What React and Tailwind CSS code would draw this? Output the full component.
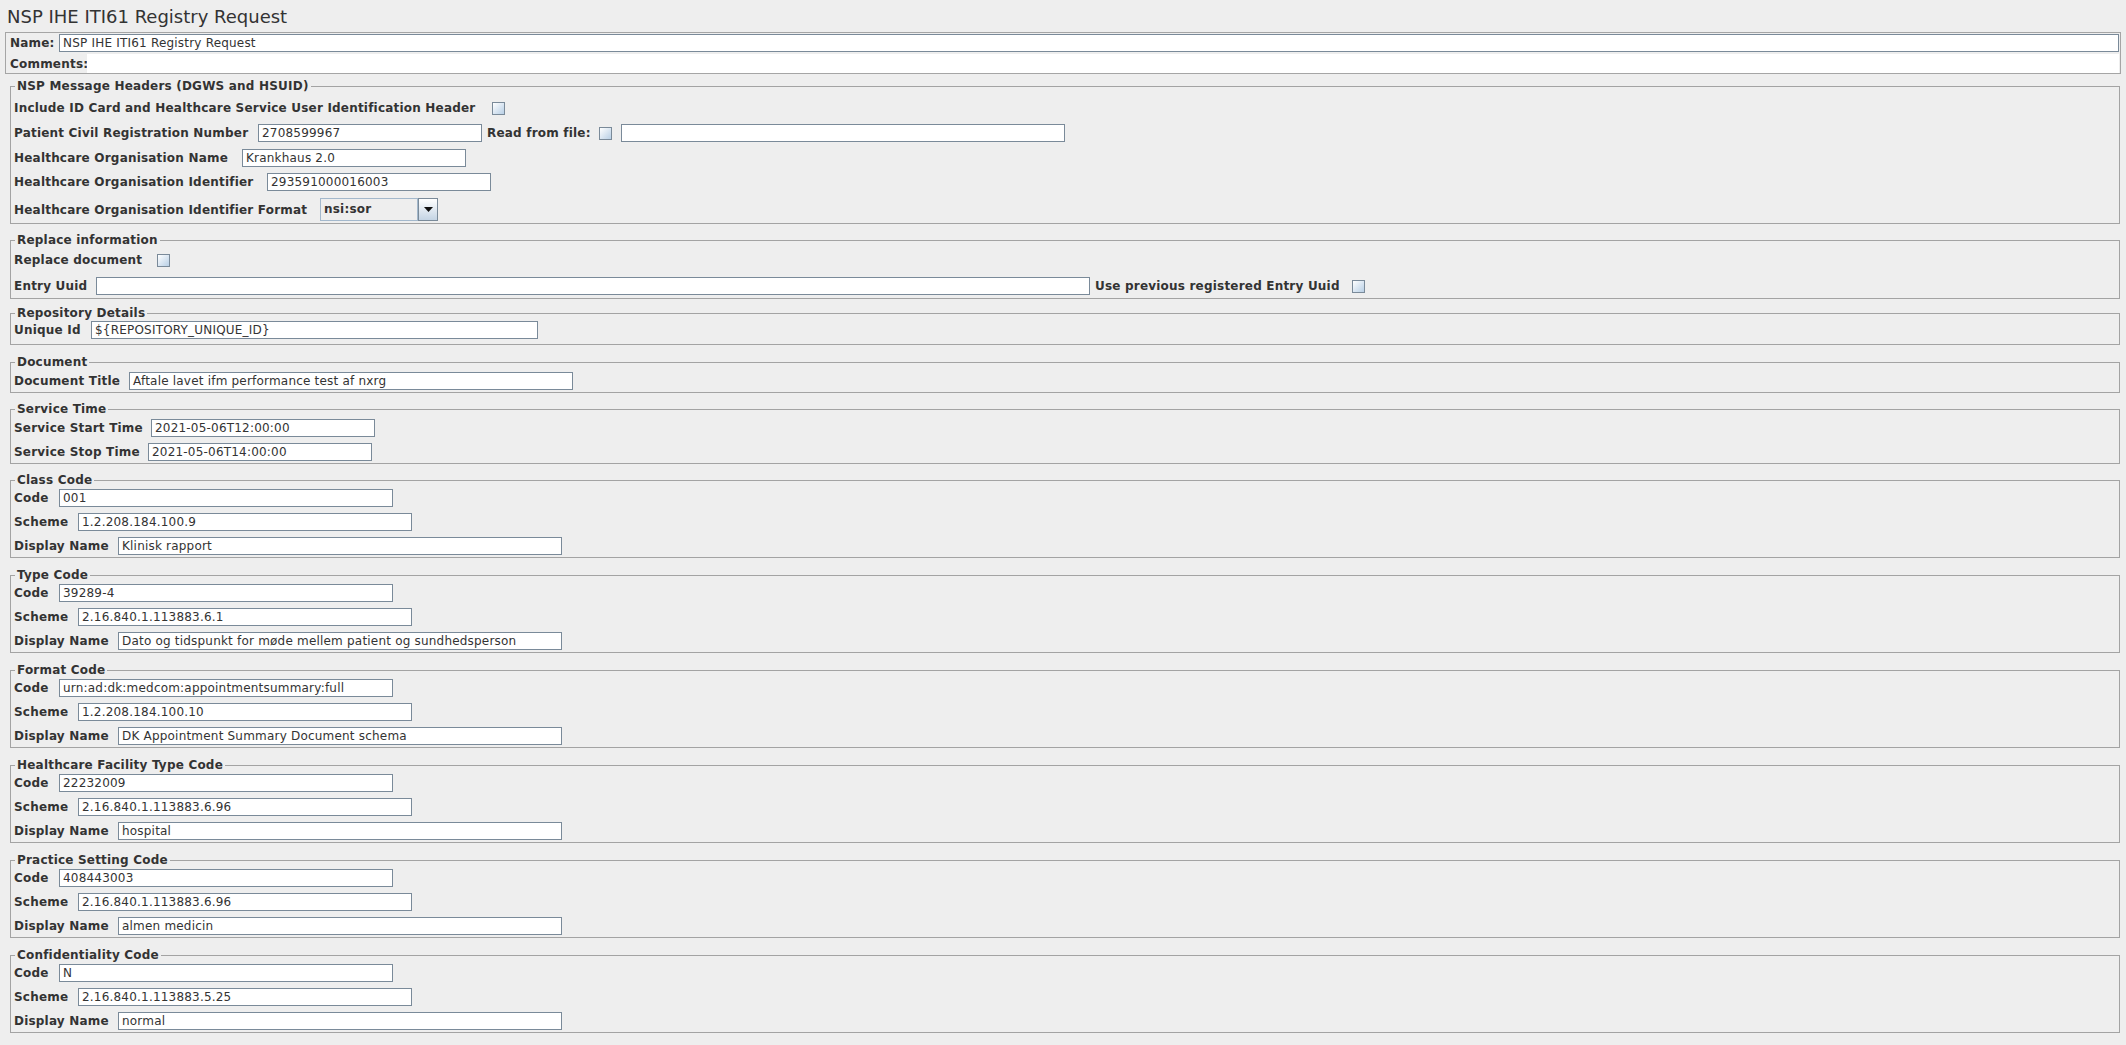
import React from "react";

// Swing-like form fields
const Field = ({ w, value, className = "" }) => (
  <div
    className={`h-[18px] shrink-0 border border-[#7a8a99] bg-white pl-[3px] text-[12px] leading-[16px] tracking-[0.2px] font-normal whitespace-nowrap overflow-hidden ${w} ${className}`}
  >
    {value}
  </div>
);

const Check = ({ className = "" }) => (
  <div className={`w-[13px] h-[13px] shrink-0 border border-[#7a8a99] bg-linear-to-br from-white to-[#b8cfe5] ${className}`} />
);

// label column: width fixed so the field lands where Swing put it
const Label = ({ children, className = "" }) => (
  <span className={`shrink-0 font-bold text-[12px] leading-[16px] tracking-[0.2px] whitespace-nowrap ${className}`}>{children}</span>
);

const Group = ({ title, className = "", children }) => (
  <fieldset className={`border border-[#a3a3a3] pl-[3px] pr-[3px] ${className}`}>
    <legend className="ml-[1px] px-[2px] font-bold text-[12px] leading-[16px] tracking-[0.2px]">{title}</legend>
    {children}
  </fieldset>
);

const codeGroups = [
  { title: "Class Code", code: "001", scheme: "1.2.208.184.100.9", name: "Klinisk rapport" },
  { title: "Type Code", code: "39289-4", scheme: "2.16.840.1.113883.6.1", name: "Dato og tidspunkt for møde mellem patient og sundhedsperson" },
  { title: "Format Code", code: "urn:ad:dk:medcom:appointmentsummary:full", scheme: "1.2.208.184.100.10", name: "DK Appointment Summary Document schema" },
  { title: "Healthcare Facility Type Code", code: "22232009", scheme: "2.16.840.1.113883.6.96", name: "hospital" },
  { title: "Practice Setting Code", code: "408443003", scheme: "2.16.840.1.113883.6.96", name: "almen medicin" },
  { title: "Confidentiality Code", code: "N", scheme: "2.16.840.1.113883.5.25", name: "normal" },
];

const CodeGroup = ({ g, first }) => (
  <Group title={g.title} className={`${first ? "mt-[8px]" : "mt-[9px]"} pb-[2px]`}>
    <div className="mt-[1px] flex flex-col gap-[6px]">
      <div className="flex items-center">
        <Label className="w-[45px]">Code</Label>
        <Field w="w-[334px]" value={g.code} />
      </div>
      <div className="flex items-center">
        <Label className="w-[64px]">Scheme</Label>
        <Field w="w-[334px]" value={g.scheme} />
      </div>
      <div className="flex items-center">
        <Label className="w-[104px]">Display Name</Label>
        <Field w="w-[444px]" value={g.name} />
      </div>
    </div>
  </Group>
);

const App = () => {
  return (
    <div className="min-h-screen bg-[#eeeeee] px-[5px] pb-[10px] font-['DejaVu_Sans',sans-serif] text-[#333333]">
      <div className="h-[32px] pt-[5px] pl-[2px] text-[18px] leading-[24px]">NSP IHE ITI61 Registry Request</div>

      {/* name + comments */}
      <div className="flex h-[42px] flex-col border border-[#a5a5a5] pl-[4px] pr-[1px] pt-[1px]">
        <div className="flex h-[18px] items-center">
          <Label className="w-[49px]">Name:</Label>
          <Field w="flex-1" value="NSP IHE ITI61 Registry Request" />
        </div>
        <div className="mt-[2px] flex h-[19px] items-center">
          <Label className="w-[77px]">Comments:</Label>
          <div className="h-full flex-1 bg-white" />
        </div>
      </div>

      <div className="ml-[5px] mr-[1px] flex flex-col">
        <Group title="NSP Message Headers (DGWS and HSUID)" className="mt-[4px] pb-[2px]">
          <div className="mt-[4px] flex h-[20px] items-center">
            <Label className="w-[478px]">Include ID Card and Healthcare Service User Identification Header</Label>
            <Check />
          </div>
          <div className="mt-[6px] flex items-center">
            <Label className="w-[244px]">Patient Civil Registration Number</Label>
            <Field w="w-[224px]" value="2708599967" />
            <Label className="ml-[5px] w-[112px]">Read from file:</Label>
            <Check />
            <Field w="w-[444px]" className="ml-[9px]" value="" />
          </div>
          <div className="mt-[7px] flex items-center">
            <Label className="w-[228px]">Healthcare Organisation Name</Label>
            <Field w="w-[224px]" value="Krankhaus 2.0" />
          </div>
          <div className="mt-[6px] flex items-center">
            <Label className="w-[253px]">Healthcare Organisation Identifier</Label>
            <Field w="w-[224px]" value="293591000016003" />
          </div>
          <div className="mt-[7px] flex items-center">
            <Label className="w-[306px]">Healthcare Organisation Identifier Format</Label>
            <div className="flex h-[23px] w-[118px] shrink-0">
              <div className="flex-1 border border-[#a3b8cc] bg-[#eeeeee] pl-[3px] text-[12px] font-bold leading-[21px] tracking-[0.2px]">nsi:sor</div>
              <div className="flex w-[20px] items-center justify-center border border-[#7a8a99] bg-linear-to-b from-white to-[#c4d4e4]">
                <svg width="9" height="5" viewBox="0 0 9 5">
                  <polygon points="0,0 9,0 4.5,5" fill="#111" />
                </svg>
              </div>
            </div>
          </div>
        </Group>

        <Group title="Replace information" className="mt-[8px] pb-[3px]">
          <div className="mt-[2px] flex h-[20px] items-center">
            <Label className="w-[143px]">Replace document</Label>
            <Check />
          </div>
          <div className="mt-[7px] flex items-center">
            <Label className="w-[82px]">Entry Uuid</Label>
            <Field w="w-[994px]" value="" />
            <Label className="ml-[5px] w-[257px]">Use previous registered Entry Uuid</Label>
            <Check />
          </div>
        </Group>

        <Group title="Repository Details" className="mt-[6px] pb-[5px]">
          <div className="flex items-center">
            <Label className="w-[77px]">Unique Id</Label>
            <Field w="w-[447px]" value="${REPOSITORY_UNIQUE_ID}" />
          </div>
        </Group>

        <Group title="Document" className="mt-[9px] pb-[2px]">
          <div className="mt-[2px] flex items-center">
            <Label className="w-[115px]">Document Title</Label>
            <Field w="w-[444px]" value="Aftale lavet ifm performance test af nxrg" />
          </div>
        </Group>

        <Group title="Service Time" className="mt-[8px] pb-[2px]">
          <div className="mt-[2px] flex flex-col gap-[6px]">
            <div className="flex items-center">
              <Label className="w-[137px]">Service Start Time</Label>
              <Field w="w-[224px]" value="2021-05-06T12:00:00" />
            </div>
            <div className="flex items-center">
              <Label className="w-[134px]">Service Stop Time</Label>
              <Field w="w-[224px]" value="2021-05-06T14:00:00" />
            </div>
          </div>
        </Group>

        {codeGroups.map((g, i) => (
          <CodeGroup key={g.title} g={g} first={i === 0} />
        ))}
      </div>
    </div>
  );
};

export default App;
